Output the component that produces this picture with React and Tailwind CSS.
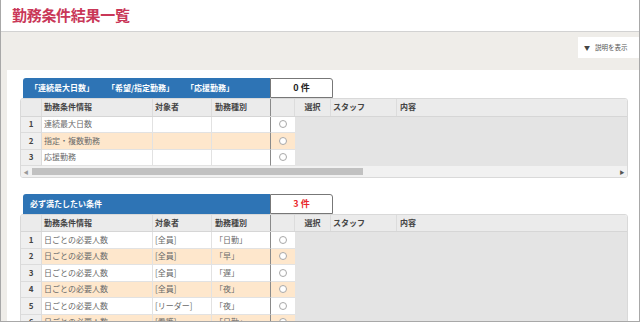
import React from 'react';

const HEAD_COLS = 'grid grid-cols-[21px_111px_59px_59px_24px_36px_66px_1fr]';
const BODY_COLS = 'grid grid-cols-[21px_111px_59px_59px_24px]';

const firstRows = [
  { info: '連続最大日数', target: '', type: '' },
  { info: '指定・複数勤務', target: '', type: '', alt: true },
  { info: '応援勤務', target: '', type: '' },
];

const mustRows = [
  { info: '日ごとの必要人数', target: '[全員]', type: '「日勤」' },
  { info: '日ごとの必要人数', target: '[全員]', type: '「早」', alt: true },
  { info: '日ごとの必要人数', target: '[全員]', type: '「遅」' },
  { info: '日ごとの必要人数', target: '[全員]', type: '「夜」', alt: true },
  { info: '日ごとの必要人数', target: '[リーダー]', type: '「夜」' },
  { info: '日ごとの必要人数', target: '[看護]', type: '「日勤」', alt: true },
];

function SectionBar({ children, count, red }) {
  return (
    <div className="flex h-[20px] pl-[3px]">
      <div className="w-[247px] h-full bg-[#2e74b5] rounded-tl-[3px] flex items-center pl-[7px] text-[8px] font-bold text-white">
        {children}
      </div>
      <div
        className={`w-[63px] h-full border border-[#777] rounded-tr-[3px] flex items-center justify-center text-[9px] font-bold ${
          red ? 'text-[#e8282b]' : 'text-[#222]'
        }`}
      >
        {count}
      </div>
    </div>
  );
}

function Radio() {
  return <span className="block w-[8px] h-[8px] rounded-full border border-[#a8a8a8] bg-white" />;
}

function ResultTable({ rows, scroll }) {
  return (
    <div className="border border-[#d9d9d9] rounded-[3px] overflow-hidden text-[8px] whitespace-nowrap">
      {/* header */}
      <div className={`${HEAD_COLS} h-[17.5px] bg-[#ebebeb] font-bold text-[#444] border-b border-[#d6d6d6]`}>
        <div className="border-r border-[#dcdcdc]" />
        <div className="flex items-center pl-[2px] border-r border-[#dcdcdc]">勤務条件情報</div>
        <div className="flex items-center pl-[2px] border-r border-[#dcdcdc]">対象者</div>
        <div className="flex items-center pl-[3px] border-r border-[#8a8a8a]">勤務種別</div>
        <div className="border-r border-[#dcdcdc]" />
        <div className="flex items-center justify-center border-r border-[#dcdcdc]">選択</div>
        <div className="flex items-center pl-[2px] border-r border-[#dcdcdc]">スタッフ</div>
        <div className="flex items-center pl-[3px]">内容</div>
      </div>
      {/* body */}
      <div className="flex">
        <div className={BODY_COLS}>
          {rows.map((r, i) => {
            const bg = r.alt ? 'bg-[#fee7cc]' : 'bg-white';
            return (
              <React.Fragment key={i}>
                <div className="h-[16.5px] flex items-center justify-center bg-[#efefef] font-bold text-[#444] border-b border-r border-[#dcdcdc]">
                  {i + 1}
                </div>
                <div className={`h-[16.5px] flex items-center pl-[2px] text-[#6a6a6a] border-b border-r border-[#e2e2e2] ${bg}`}>
                  {r.info}
                </div>
                <div className={`h-[16.5px] flex items-center pl-[2px] text-[#6a6a6a] border-b border-r border-[#e2e2e2] ${bg}`}>
                  {r.target}
                </div>
                <div className={`h-[16.5px] flex items-center pl-[3px] text-[#6a6a6a] border-b border-r border-b-[#e2e2e2] border-r-[#8a8a8a] ${bg}`}>
                  {r.type}
                </div>
                <div className={`h-[16.5px] flex items-center justify-center border-b border-[#e2e2e2] ${bg}`}>
                  <Radio />
                </div>
              </React.Fragment>
            );
          })}
        </div>
        <div className="flex-1 bg-[#e4e4e4]" />
      </div>
      {scroll && (
        <div className="h-[10.5px] bg-[#f1f1f1] flex items-center">
          <span className="w-[10px] flex justify-center text-[5px] text-[#999]">◀</span>
          <div className="ml-[1px] w-[331px] h-[7px] bg-[#c1c1c1]" />
          <div className="flex-1" />
          <span className="w-[10px] flex justify-center text-[5px] text-[#555]">▶</span>
        </div>
      )}
    </div>
  );
}

export default function App() {
  return (
    <div className="w-[640px] h-[322px] overflow-hidden border-x border-b border-[#a8a8a8] bg-[#efede9] font-['Noto_Sans_CJK_JP','Noto_Sans',sans-serif]">
      {/* Title bar */}
      <header className="h-[32px] bg-white border-b border-[#d2d2d2] flex items-center pl-[11px]">
        <h1 className="text-[15px] font-bold text-[#c93758] tracking-[-0.3px]">勤務条件結果一覧</h1>
      </header>

      {/* Toolbar */}
      <div className="h-[38px] flex justify-end pt-[5px]">
        <button className="w-[61px] h-[21px] bg-white flex items-center gap-[5px] pl-[6px] text-[6.5px] text-[#555]">
          <span className="text-[6px] text-[#444]">▼</span>
          説明を表示
        </button>
      </div>

      {/* Content panel */}
      <main className="ml-[6px] bg-white pt-[8px] pl-[13px] pr-[11px] h-full">
        <section>
          <SectionBar count="0 件">
            <span>「連続最大日数」</span>
            <span className="ml-[13px]">「希望/指定勤務」</span>
            <span className="ml-[12px]">「応援勤務」</span>
          </SectionBar>
          <ResultTable rows={firstRows} scroll />
        </section>

        <section className="mt-[16px]">
          <SectionBar count="3 件" red>
            必ず満たしたい条件
          </SectionBar>
          <ResultTable rows={mustRows} />
        </section>
      </main>
    </div>
  );
}
